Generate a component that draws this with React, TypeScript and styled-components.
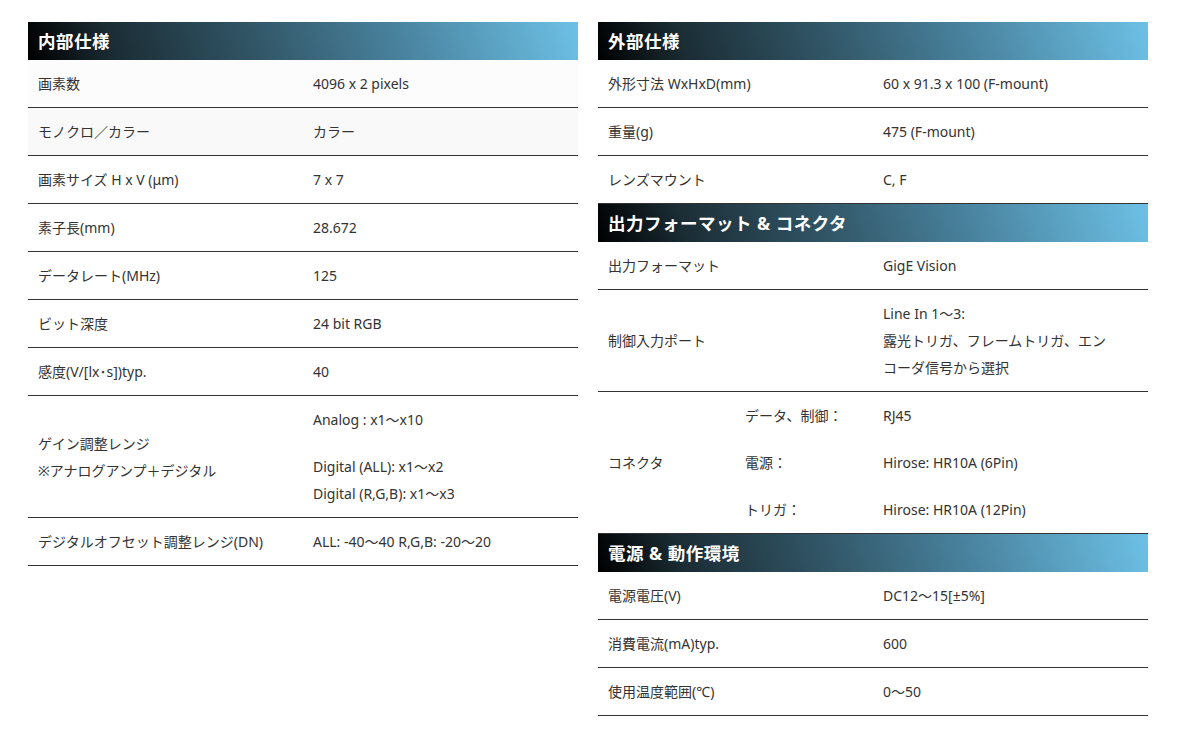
import React from "react";
import styled, { createGlobalStyle } from "styled-components";

const GlobalStyle = createGlobalStyle`
  html, body {
    margin: 0;
    padding: 0;
    background: #ffffff;
  }
  body {
    font-family: "Noto Sans", "Noto Sans CJK JP", sans-serif;
    color: #333333;
    font-size: 14px;
  }
`;

const Page = styled.div`
  display: flex;
  align-items: flex-start;
  gap: 20px;
  padding: 22px 0 0 28px;
`;

const Column = styled.section`
  width: 550px;
  display: flex;
  flex-direction: column;
`;

const SectionHeader = styled.h3`
  margin: 0;
  height: 38px;
  padding: 0 10px;
  line-height: 38px;
  font-family: "Noto Sans", "Noto Sans CJK JP", sans-serif;
  font-size: 17.5px;
  font-weight: 700;
  color: #ffffff;
  letter-spacing: 0.5px;
  background: linear-gradient(72deg, #000000 0%, #1b2d35 16%, #325768 42%, #4a84a0 68%, #6dc1e6 100%);
`;

const Row = styled.div<{ $bg?: string }>`
  display: grid;
  grid-template-columns: 275px 275px;
  border-bottom: 1px solid #333333;
  background: ${(p) => p.$bg ?? "#ffffff"};
`;

const Cell = styled.div`
  padding: 10px;
  line-height: 27px;
  align-self: center;
`;

const Line = styled.p<{ $gap?: boolean }>`
  margin: ${(p) => (p.$gap ? "20px 0 0" : "0")};
`;

const ConnectorGroup = styled.div`
  display: grid;
  grid-template-columns: 137px 138px 275px;
  border-bottom: 1px solid #333333;
`;

const GroupLabel = styled(Cell)<{ $span: number }>`
  grid-row: span ${(p) => p.$span};
`;

type Spec = { label: React.ReactNode; value: React.ReactNode; bg?: string };

const internal: Spec[] = [
  { label: "画素数", value: "4096 x 2 pixels", bg: "#fcfcfc" },
  { label: "モノクロ／カラー", value: "カラー", bg: "#f9f9f9" },
  { label: "画素サイズ H x V (μm)", value: "7 x 7" },
  { label: "素子長(mm)", value: "28.672" },
  { label: "データレート(MHz)", value: "125" },
  { label: "ビット深度", value: "24 bit RGB" },
  { label: "感度(V/[lx･s])typ.", value: "40" },
  {
    label: (
      <>
        ゲイン調整レンジ
        <br />
        ※アナログアンプ＋デジタル
      </>
    ),
    value: (
      <>
        <Line>Analog : x1〜x10</Line>
        <Line $gap>Digital (ALL): x1〜x2</Line>
        <Line>Digital (R,G,B): x1〜x3</Line>
      </>
    ),
  },
  { label: "デジタルオフセット調整レンジ(DN)", value: "ALL: -40〜40 R,G,B: -20〜20" },
];

const external: Spec[] = [
  { label: "外形寸法 WxHxD(mm)", value: "60 x 91.3 x 100 (F-mount)" },
  { label: "重量(g)", value: "475 (F-mount)" },
  { label: "レンズマウント", value: "C, F" },
];

const output: Spec[] = [
  { label: "出力フォーマット", value: "GigE Vision" },
  {
    label: "制御入力ポート",
    value: (
      <>
        <Line>Line In 1〜3:</Line>
        <Line>
          露光トリガ、フレームトリガ、エン
          <br />
          コーダ信号から選択
        </Line>
      </>
    ),
  },
];

const connectors = [
  { sub: "データ、制御：", value: "RJ45" },
  { sub: "電源：", value: "Hirose: HR10A (6Pin)" },
  { sub: "トリガ：", value: "Hirose: HR10A (12Pin)" },
];

const power: Spec[] = [
  { label: "電源電圧(V)", value: "DC12〜15[±5%]" },
  { label: "消費電流(mA)typ.", value: "600" },
  { label: "使用温度範囲(℃)", value: "0〜50" },
];

const SpecRows = ({ items }: { items: Spec[] }) => (
  <>
    {items.map((s, i) => (
      <Row key={i} $bg={s.bg}>
        <Cell>{s.label}</Cell>
        <Cell>{s.value}</Cell>
      </Row>
    ))}
  </>
);

export default function App() {
  return (
    <>
      <GlobalStyle />
      <Page>
        <Column>
          <SectionHeader>内部仕様</SectionHeader>
          <SpecRows items={internal} />
        </Column>
        <Column>
          <SectionHeader>外部仕様</SectionHeader>
          <SpecRows items={external} />
          <SectionHeader>出力フォーマット &amp; コネクタ</SectionHeader>
          <SpecRows items={output} />
          <ConnectorGroup>
            <GroupLabel $span={connectors.length}>コネクタ</GroupLabel>
            {connectors.map((c, i) => (
              <React.Fragment key={i}>
                <Cell>{c.sub}</Cell>
                <Cell>{c.value}</Cell>
              </React.Fragment>
            ))}
          </ConnectorGroup>
          <SectionHeader>電源 &amp; 動作環境</SectionHeader>
          <SpecRows items={power} />
        </Column>
      </Page>
    </>
  );
}
